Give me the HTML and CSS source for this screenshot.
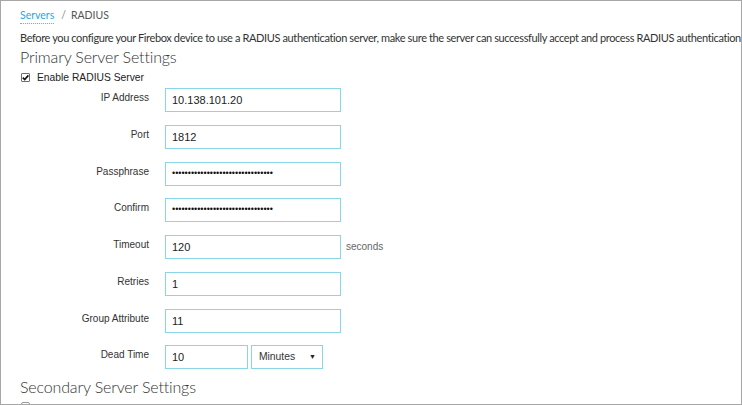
FILE: index.html
```html
<!DOCTYPE html>
<html>
<head>
<meta charset="utf-8">
<link rel="stylesheet" href="styles.css">
</head>
<body>
<div class="frame">
  <nav class="crumbs"><a class="crumb-link">Servers</a><span class="crumb-sep">/</span><span class="crumb-cur">RADIUS</span></nav>
  <p class="intro">Before you configure your Firebox device to use a RADIUS authentication server, make sure the server can successfully accept and process RADIUS authentication</p>
  <h2 class="section-title">Primary Server Settings</h2>
  <div class="check-row">
    <span class="box"><svg viewBox="0 0 9 9" width="9" height="9"><path d="M1.8 4.6 L3.7 6.5 L7.4 2.4" fill="none" stroke="#111" stroke-width="1.6"/></svg></span>
    <span>Enable RADIUS Server</span>
  </div>
  <div class="form">
    <div class="row"><span class="lbl">IP Address</span><div class="field">10.138.101.20</div></div>
    <div class="row"><span class="lbl">Port</span><div class="field">1812</div></div>
    <div class="row"><span class="lbl">Passphrase</span><div class="field dots">••••••••••••••••••••••••••••••••</div></div>
    <div class="row"><span class="lbl">Confirm</span><div class="field dots">••••••••••••••••••••••••••••••••</div></div>
    <div class="row"><span class="lbl">Timeout</span><div class="field">120</div><span class="unit">seconds</span></div>
    <div class="row"><span class="lbl">Retries</span><div class="field">1</div></div>
    <div class="row"><span class="lbl">Group Attribute</span><div class="field">11</div></div>
    <div class="row"><span class="lbl">Dead Time</span><div class="field short">10</div><div class="select">Minutes</div></div>
  </div>
  <h2 class="section-title secondary">Secondary Server Settings</h2>
  <div class="check-row second"><span class="box" aria-label="Enable RADIUS Server"></span></div>
</div>
</body>
</html>
```
FILE: styles.css
```css
html, body { margin: 0; padding: 0; background: #fff; }
.frame {
  box-sizing: border-box;
  width: 742px;
  height: 405px;
  border: 1px solid #a7a7a7;
  overflow: hidden;
  padding: 7px 0 0 19px;
  font-family: "Liberation Sans", Arial, sans-serif;
  color: #333;
}
.crumbs {
  font-family: Lato, "Open Sans", sans-serif;
  font-size: 10.5px;
  height: 23px;
  line-height: 14px;
  display: flex;
  align-items: flex-start;
}
.crumb-link {
  color: #2aa7df;
  border-bottom: 1px dotted #56bde8;
  padding-bottom: 1px;
}
.crumb-sep { color: #888; margin: 0 5px 0 7px; }
.crumb-cur { color: #555; }
.intro {
  margin: 0;
  height: 14px;
  font-family: Lato, "Open Sans", sans-serif;
  font-size: 11px;
  letter-spacing: -0.38px;
  line-height: 14px;
  white-space: nowrap;
  color: #333;
}
.section-title {
  margin: 2px 0 0;
  height: 20px;
  font-family: Lato, "Open Sans", sans-serif;
  font-weight: 300;
  font-size: 16px;
  letter-spacing: -0.15px;
  line-height: 20px;
  color: #333;
}
.check-row {
  display: flex;
  align-items: center;
  height: 20px;
  font-size: 10.3px;
  color: #222;
}
.box {
  box-sizing: border-box;
  width: 9px;
  height: 9px;
  margin: 0 7px 0 1px;
  border: 1px solid #6d6d6d;
  border-radius: 1px;
  background: #fff;
  display: flex;
  align-items: center;
  justify-content: center;
}
.box svg { display: block; flex: none; }
.form {
  margin-top: 1px;
  display: flex;
  flex-direction: column;
  gap: 12.77px;
}
.row { display: flex; align-items: flex-start; height: 24px; }
.lbl {
  width: 129px;
  text-align: right;
  padding-right: 16px;
  padding-top: 4px;
  font-size: 10px;
  line-height: 12px;
  color: #333;
}
.field {
  box-sizing: border-box;
  width: 176px;
  height: 24px;
  border: 1px solid #8ad6e9;
  padding: 0 6px;
  line-height: 22px;
  font-size: 11px;
  color: #222;
}
.field.dots { font-size: 9px; line-height: 21px; color: #111; }
.field.short { width: 83px; }
.unit { margin-left: 5px; padding-top: 6px; font-size: 10px; line-height: 12px; color: #666; }
.select {
  box-sizing: border-box;
  width: 72px;
  height: 24px;
  margin-left: 3px;
  border: 1px solid #8ad6e9;
  padding: 0 7px;
  line-height: 22px;
  font-size: 10.3px;
  color: #333;
  position: relative;
}
.select::after {
  content: "▼";
  position: absolute;
  right: 6px;
  top: 0;
  font-size: 7px;
  color: #222;
}
.secondary { margin-top: 8px; }
.check-row.second { align-items: flex-start; height: 10px; padding-top: 5px; }
.check-row.second .box { border-color: #999; border-radius: 2px; }
```
